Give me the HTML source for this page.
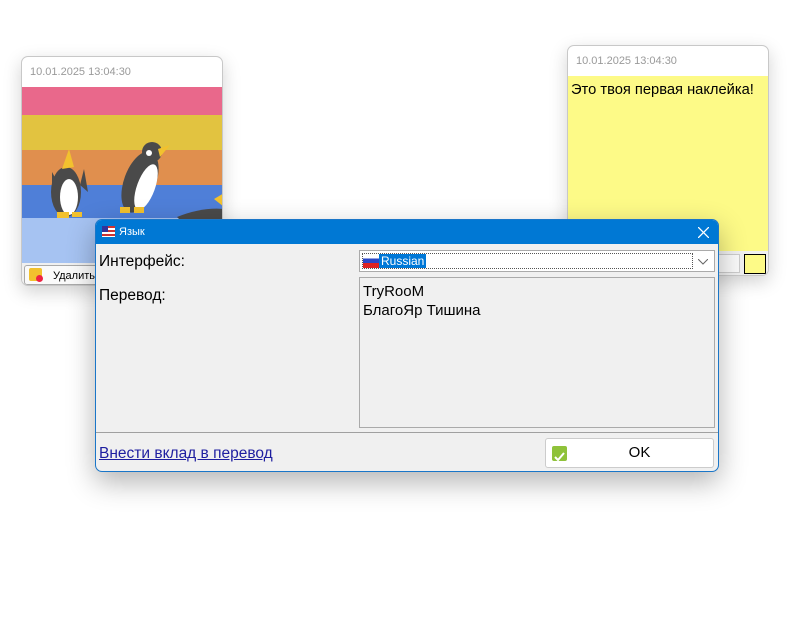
<!DOCTYPE html>
<html><head><meta charset="utf-8"><style>
*{margin:0;padding:0;box-sizing:border-box}
body{width:791px;height:617px;background:#fff;position:relative;overflow:hidden;font-family:"Liberation Sans","DejaVu Sans",sans-serif}
.abs{position:absolute}
.note{position:absolute;border:1px solid #c8c8c8;border-radius:7px;overflow:hidden;box-shadow:0 6px 18px rgba(0,0,0,.18);background:#fff}
.hdr{height:30px;font-size:11px;color:#9a9a9a;padding:9px 0 0 8px}
</style></head><body>
<div class="note" style="left:21px;top:56px;width:202px;height:230px">
 <div class="hdr">10.01.2025 13:04:30</div>
 <div style="height:28px;background:#e9688b"></div>
 <div style="height:35px;background:#e2c340"></div>
 <div style="height:35px;background:#e08f4e"></div>
 <div style="height:33px;background:#4f7fd8"></div>
 <div style="height:45px;background:#a6c3f2"></div>
 <svg class="abs" style="left:0;top:0" width="202" height="230">
  <path d="M30 115 L38 130 L30 140Z M62 112 L58 128 L66 135Z" fill="#4a4a4a"/>
  <ellipse cx="44" cy="135" rx="15" ry="25" fill="#4a4a4a"/><ellipse cx="47" cy="140" rx="9" ry="18" fill="#fff"/>
  <path d="M40 112 L47 92 L52 110Z" fill="#f2c12e"/>
  <ellipse cx="118" cy="125" rx="16" ry="32" fill="#4a4a4a" transform="rotate(20 118 125)"/><ellipse cx="124" cy="130" rx="9" ry="24" fill="#fff" transform="rotate(20 124 130)"/>
  <circle cx="130" cy="95" r="10" fill="#4a4a4a"/><circle cx="127" cy="96" r="3" fill="#fff"/><path d="M136 92 L148 88 L138 100Z" fill="#f2c12e"/>
  <path d="M98 150h10v6h-10zM112 150h10v6h-10zM35 155h12v6H35zM50 155h10v5H50z" fill="#f2c12e"/>
  <path d="M155 160 Q180 150 202 152 L202 165 L160 165Z" fill="#4a4a4a"/><path d="M192 142 L202 136 L202 150Z" fill="#f2c12e"/>
 </svg>
 <div class="abs" style="left:0;top:206px;width:202px;height:24px;background:#f0f0f0"></div>
 <div class="abs" style="left:2px;top:208px;width:90px;height:20px;border:1px solid #aaa;border-radius:3px;background:#fafafa;font-size:11px;padding:4px 0 0 28px">Удалить</div>
 <div class="abs" style="left:7px;top:211px;width:13px;height:13px;background:#f2c12e;border-radius:2px"></div>
 <div class="abs" style="left:14px;top:218px;width:7px;height:7px;background:#e24;border-radius:50%"></div>
</div>
<div class="note" style="left:567px;top:45px;width:202px;height:231px">
 <div class="hdr">10.01.2025 13:04:30</div>
 <div style="height:175px;background:#fdfa87;font-size:14.7px;padding:6px 0 0 3px;color:#000">Это твоя первая наклейка!</div>
 <div style="height:26px;background:#f0f0f0;position:relative">
  <div class="abs" style="left:140px;top:3px;width:32px;height:19px;border:1px solid #ccc;background:#fafafa;font-size:11px;color:#888;padding:3px 0 0 2px">я</div>
  <div class="abs" style="left:176px;top:3px;width:22px;height:20px;border:1px solid #000;background:#fdfa87"></div>
 </div>
</div>
<div class="abs" style="left:95px;top:219px;width:624px;height:253px;border:1px solid #1a76c8;border-radius:7px;overflow:hidden;background:#f0f0f0;box-shadow:0 10px 28px rgba(0,0,0,.3)">
 <div style="height:24px;background:#0078d4;position:relative;color:#fff;font-size:11px;padding:6px 0 0 23px">Язык
  <div class="abs" style="left:6px;top:6px;width:13px;height:11px;background:repeating-linear-gradient(#c33 0 2px,#fff 2px 4px)"><div style="width:6px;height:6px;background:#339"></div></div>
  <svg class="abs" style="left:602px;top:7px" width="11" height="11"><path d="M0 0L11 11M11 0L0 11" stroke="#fff" stroke-width="1.3"/></svg>
 </div>
 <div class="abs" style="left:3px;top:33px;font-size:15.5px">Интерфейс:</div>
 <div class="abs" style="left:3px;top:67px;font-size:15.5px">Перевод:</div>
 <div class="abs" style="left:263px;top:30px;width:356px;height:22px;border:1px solid #aaa;background:#fff">
  <div class="abs" style="left:2px;top:2px;width:331px;height:16px;border:1px dotted #555"></div>
  <div class="abs" style="left:3px;top:3px;width:16px;height:14px;background:linear-gradient(#fff 0 33%,#2a47c8 33% 66%,#d22 66%)"></div>
  <div class="abs" style="left:19px;top:3px;height:14px;background:#0078d7;color:#fff;font-size:12px;padding:0 2px;line-height:14px">Russian</div>
  <svg class="abs" style="left:338px;top:8px" width="10" height="6"><path d="M0 0L5 5L10 0" fill="none" stroke="#666"/></svg>
 </div>
 <div class="abs" style="left:263px;top:57px;width:356px;height:151px;border:1px solid #aaa;background:#f0f0f0;font-size:15px;line-height:19px;padding:4px 0 0 3px">TryRooM<br>БлагоЯр Тишина</div>
 <div class="abs" style="left:0;top:212px;width:624px;height:1px;background:#a0a0a0"></div>
 <div class="abs" style="left:3px;top:225px;font-size:15.5px;text-decoration:underline;color:#1e1ea0">Внести вклад в перевод</div>
 <div class="abs" style="left:449px;top:218px;width:169px;height:30px;border:1px solid #ccc;border-radius:3px;background:#fff;font-size:15px;text-align:center;line-height:28px;padding-left:20px">OK
  <div class="abs" style="left:6px;top:7px;width:15px;height:15px;background:#8fc23a;border-radius:2px"><svg width="15" height="15"><path d="M3 8L6 11L12 4" fill="none" stroke="#fff" stroke-width="2"/></svg></div>
 </div>
</div>
</body></html>
